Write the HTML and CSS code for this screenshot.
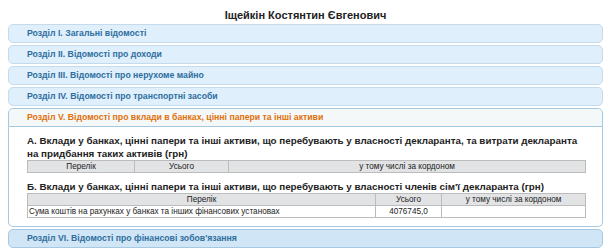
FILE: index.html
```html
<!DOCTYPE html>
<html lang="uk">
<head>
  <meta charset="UTF-8"/>
  <title> Іщейкін Костянтин Євгенович</title>
  <link rel="stylesheet" href="styles.css">
</head>
<body>
  <h1 class="person">Іщейкін Костянтин Євгенович</h1>
  <div class="accordion">
    <h3 class="acc-head">Розділ I. Загальні відомості</h3>
    <h3 class="acc-head">Розділ II. Відомості про доходи</h3>
    <h3 class="acc-head">Розділ III. Відомості про нерухоме майно</h3>
    <h3 class="acc-head">Розділ IV. Відомості про транспортні засоби</h3>
    <h3 class="acc-head active">Розділ V. Відомості про вклади в банках, цінні папери та інші активи</h3>
    <div class="acc-content">
      <h4 class="part">А. Вклади у банках, цінні папери та інші активи, що перебувають у власності декларанта, та витрати декларанта на придбання таких активів (грн)</h4>
      <table class="decl">
        <colgroup><col class="c-list1"><col class="c-sum1"><col></colgroup>
        <thead>
          <tr><th>Перелік</th><th>Усього</th><th>у тому числі за кордоном</th></tr>
        </thead>
      </table>

      <h4 class="part">Б. Вклади у банках, цінні папери та інші активи, що перебувають у власності членів сім'ї декларанта (грн)</h4>
      <table class="decl">
        <colgroup><col class="c-list2"><col class="c-sum2"><col></colgroup>
        <thead>
          <tr><th>Перелік</th><th>Усього</th><th>у тому числі за кордоном</th></tr>
        </thead>
        <tbody>
          <tr><td>Сума коштів на рахунках у банках та інших фінансових установах</td><td class="num">4076745,0</td><td></td></tr>
        </tbody>
      </table>
    </div>
    <h3 class="acc-head hover">Розділ VI. Відомості про фінансові зобов'язання</h3>
  </div>
</body>
</html>
```

FILE: styles.css
```css
body {
  margin: 8px;
  font-family: "Liberation Sans", Arial, sans-serif;
  color: #222;
  background: #fff;
}
.person {
  margin: 1px 0 0;
  text-align: center;
  font-size: 11px;
  line-height: 13px;
  font-weight: bold;
  color: #222;
}
.acc-head {
  margin: 2px 0 0;
  padding: 2px 0 2px 18px;
  font-size: 8.7px;
  line-height: 13px;
  font-weight: bold;
  color: #2e6e9e;
  background: #dfeffc;
  border: 1px solid #c5dbec;
  border-radius: 5px;
}
.acc-head.active {
  color: #e17009;
  background: #f5f8f9;
  border-color: #a6c9e2;
  border-radius: 5px 5px 0 0;
}
.acc-head.hover {
  color: #2e6e9e;
  background: #d0e5f5;
  border-color: #a6c9e2;
}
.acc-content {
  padding: 7px 16px 8px 18px;
  background: #fff;
  border: 1px solid #a6c9e2;
  border-top: 0;
  border-radius: 0 0 5px 5px;
}
.part {
  margin: 0;
  font-size: 9.8px;
  line-height: 13px;
  font-weight: bold;
  color: #222;
}
.decl + .part { margin-top: 7px; }
.decl {
  width: 100%;
  border-collapse: collapse;
  font-size: 8.2px;
  line-height: 11px;
}
.decl th {
  background: #e1e3e5;
  border: 1px solid #bcbcbc;
  font-weight: normal;
  color: #222;
  padding: 0 2px;
}
.decl td {
  border: 1px solid #bcbcbc;
  padding: 0 1px;
  color: #222;
}
.decl td.num { text-align: center; }
.c-list1 { width: 107px; }
.c-sum1 { width: 94px; }
.c-list2 { width: 348px; }
.c-sum2 { width: 66px; }
```
